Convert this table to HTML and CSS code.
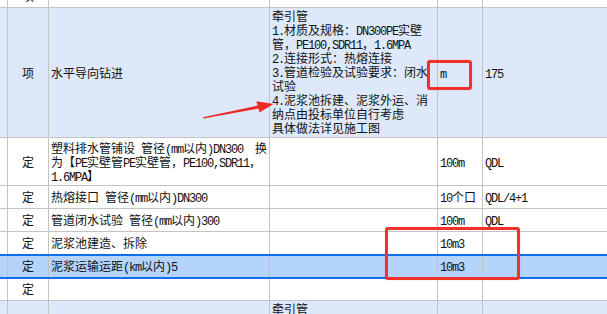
FILE: index.html
```html
<!DOCTYPE html>
<html>
<head>
<meta charset="utf-8">
<link rel="stylesheet" href="styles.css">
</head>
<body>
<div class="sheet">
  <table class="grid">
    <colgroup>
      <col class="c0"><col class="c1"><col class="c2"><col class="c3"><col class="c4"><col class="c5">
    </colgroup>
    <tbody>
      <tr class="r0"><td></td><td class="type">项</td><td></td><td></td><td></td><td></td></tr>
      <tr class="r1 item">
        <td></td>
        <td class="type">项</td>
        <td class="name">水平导向钻进</td>
        <td class="desc">牵引管<br><span class="en">1.</span>材质及规格：<span class="en">DN300PE</span>实壁<br>管，<span class="en">PE100,SDR11</span>，<span class="en">1.6MPA</span><br><span class="en">2.</span>连接形式：热熔连接<br><span class="en">3.</span>管道检验及试验要求：闭水<br>试验<br><span class="en">4.</span>泥浆池拆建、泥浆外运、消<br>纳点由投标单位自行考虑<br>具体做法详见施工图</td>
        <td class="unit"><span class="en">m</span></td>
        <td class="qty"><span class="en">175</span></td>
      </tr>
      <tr class="r2">
        <td></td>
        <td class="type">定</td>
        <td class="name">塑料排水管铺设<span class="en">&nbsp;</span>管径<span class="en">(mm</span>以内<span class="en">)DN300&nbsp;&nbsp;</span>换<br>为【<span class="en">PE</span>实壁管<span class="en">PE</span>实壁管，<span class="en">PE100,SDR11</span>，<br><span class="en">1.6MPA</span>】</td>
        <td></td>
        <td class="unit"><span class="en">100m</span></td>
        <td class="qty"><span class="en">QDL</span></td>
      </tr>
      <tr class="r3">
        <td></td>
        <td class="type">定</td>
        <td class="name">热熔接口<span class="en">&nbsp;</span>管径<span class="en">(mm</span>以内<span class="en">)DN300</span></td>
        <td></td>
        <td class="unit"><span class="en">10</span>个口</td>
        <td class="qty"><span class="en">QDL/4+1</span></td>
      </tr>
      <tr class="r3">
        <td></td>
        <td class="type">定</td>
        <td class="name">管道闭水试验<span class="en">&nbsp;</span>管径<span class="en">(mm</span>以内<span class="en">)300</span></td>
        <td></td>
        <td class="unit"><span class="en">100m</span></td>
        <td class="qty"><span class="en">QDL</span></td>
      </tr>
      <tr class="r3">
        <td></td>
        <td class="type">定</td>
        <td class="name">泥浆池建造、拆除</td>
        <td></td>
        <td class="unit"><span class="en">10m3</span></td>
        <td class="qty"></td>
      </tr>
      <tr class="r3 selected">
        <td></td>
        <td class="type">定</td>
        <td class="name">泥浆运输运距<span class="en">(km</span>以内<span class="en">)5</span></td>
        <td></td>
        <td class="unit"><span class="en">10m3</span></td>
        <td class="qty"></td>
      </tr>
      <tr class="r3">
        <td></td>
        <td class="type">定</td>
        <td class="name"></td>
        <td></td>
        <td class="unit"></td>
        <td class="qty"></td>
      </tr>
      <tr class="r1 item">
        <td></td>
        <td class="type"></td>
        <td class="name"></td>
        <td class="desc">牵引管<br><span class="en">1.</span>材质及规格：<span class="en">DN300PE</span>实壁</td>
        <td class="unit"></td>
        <td class="qty"></td>
      </tr>
    </tbody>
  </table>

  <div class="mark mark-unit"></div>
  <div class="mark mark-rows"></div>
  <svg class="arrow" width="607" height="314" viewBox="0 0 607 314">
    <polygon points="203,117.2 257.6,105.6 256.4,101.2 273.5,104 259.6,112.4 258.4,108.6 203.6,118.4" fill="#ee2a24"/>
  </svg>
</div>
</body>
</html>
```

FILE: styles.css
```css
html, body {
  margin: 0;
  padding: 0;
  overflow: hidden;
  background: #ffffff;
}

.sheet {
  position: relative;
  width: 607px;
  height: 314px;
  overflow: hidden;
}

.grid {
  border-collapse: collapse;
  table-layout: fixed;
  width: 705px;
  margin-left: -23px;
  margin-top: -17px;
  font-family: "Noto Sans CJK SC", sans-serif;
  font-size: 12px;
  line-height: 14px;
  color: #111;
}

.c0 { width: 30px; }
.c1 { width: 41px; }
.c2 { width: 221px; }
.c3 { width: 168px; }
.c4 { width: 45px; }
.c5 { width: 200px; }

.grid td {
  border: 1px solid #c3c3c3;
  padding: 0 2px;
  vertical-align: middle;
  white-space: nowrap;
  overflow: hidden;
  line-height: 14px;
}

.r0 { height: 24px; }
.r1 { height: 130px; }
.r2 { height: 48px; }
.r3 { height: 23px; }

.item td { background: #dde8fb; }

.grid td.type {
  text-align: center;
  padding: 0;
}

.grid td.desc {
  vertical-align: top;
  padding-top: 1px;
  padding-left: 2px;
}

.grid td.name { padding-left: 2px; }

.en {
  font-family: "Liberation Mono", monospace;
  font-size: 12px;
  letter-spacing: -1.2px;
  line-height: 10px;
}

.selected td {
  background: #b4d4fb;
  border-top: 2px solid #0f6ee8;
  border-bottom: 2px solid #0f6ee8;
}

.mark {
  position: absolute;
  border: 3px solid #f2312b;
  border-radius: 3px;
  box-shadow: 0 0 1px rgba(242, 49, 43, 0.6);
  box-sizing: border-box;
}

.mark-unit {
  left: 427px;
  top: 60px;
  width: 45px;
  height: 30px;
}

.mark-rows {
  left: 385px;
  top: 227px;
  width: 135px;
  height: 53px;
}

.arrow {
  position: absolute;
  left: 0;
  top: 0;
}
```
